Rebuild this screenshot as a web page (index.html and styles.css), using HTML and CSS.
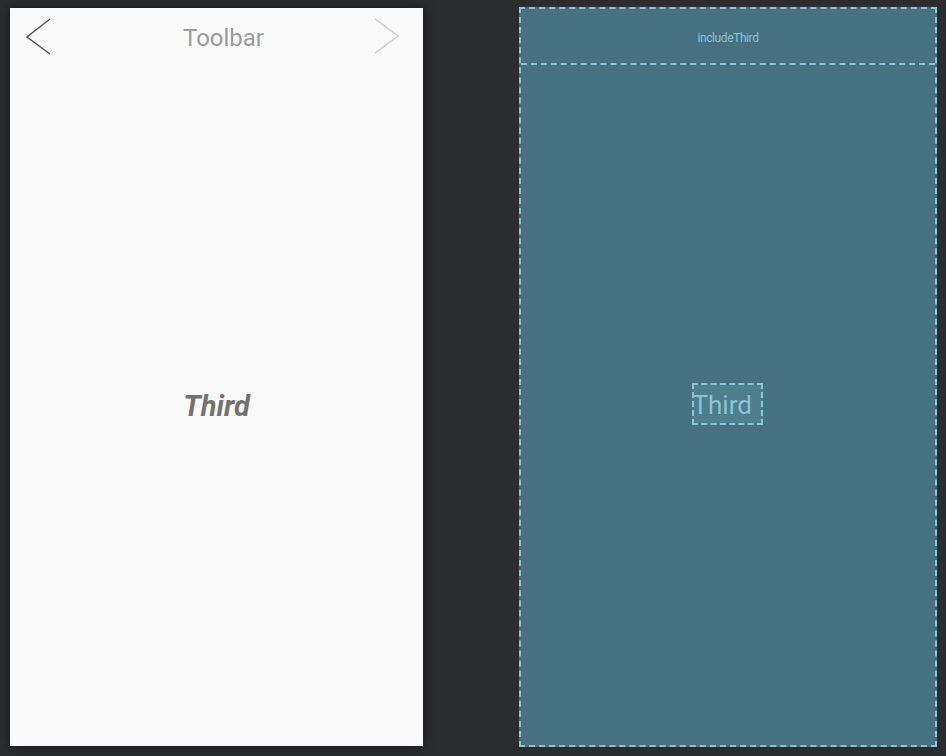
FILE: index.html
```html
<!DOCTYPE html>
<html lang="en">
<head>
    <meta charset="UTF-8">
    <meta name="viewport" content="width=device-width, initial-scale=1.0">
    <title>Layout preview</title>
    <link rel="stylesheet" href="styles.css">
</head>
<body>
    <div class="workspace">
        <div class="phone">
            <div class="toolbar">
                <svg class="nav-icon" width="30" height="40" viewBox="0 0 30 40">
                    <polyline points="24,2 1,20 24,37" fill="none" stroke="#555" stroke-width="1.5"/>
                </svg>
                <span class="toolbar-title">Toolbar</span>
                <svg class="nav-icon" width="30" height="40" viewBox="0 0 30 40">
                    <polyline points="6,2 29,19 6,36" fill="none" stroke="#cfcfcf" stroke-width="1.5"/>
                </svg>
            </div>
            <div class="phone-content">
                <span class="big-label">Third</span>
            </div>
        </div>

        <div class="blueprint">
            <div class="bp-header">includeThird</div>
            <div class="bp-content">
                <div class="bp-label">Third</div>
            </div>
        </div>
    </div>
</body>
</html>
```

FILE: styles.css
```css
body {
    margin: 0;
    background-color: #2b2c2e;
    font-family: Roboto, "Liberation Sans", sans-serif;
    height: 100vh;
    overflow: hidden;
}

.workspace {
    display: flex;
    align-items: flex-start;
    padding: 8px 0 0 10px;
}

.phone {
    width: 413px;
    height: 738px;
    background-color: #fafafa;
    box-shadow: 0 0 10px rgba(0, 0, 0, 0.5);
    display: flex;
    flex-direction: column;
}

.toolbar {
    height: 58px;
    display: flex;
    align-items: center;
    justify-content: space-between;
    padding: 0 24px 0 16px;
}

.nav-icon {
    display: block;
}

.toolbar-title {
    font-size: 24px;
    color: #9b9b9b;
    margin-left: 22px;
    padding-top: 2px;
}

.phone-content {
    flex: 1;
    display: flex;
    justify-content: center;
    align-items: center;
}

.big-label {
    font-size: 29px;
    font-weight: bold;
    font-style: italic;
    color: #727272;
}

.blueprint {
    margin-left: 96px;
    margin-top: -1px;
    width: 414px;
    height: 736px;
    background-color: #477180;
    border: 2px dashed #86c5d8;
    display: flex;
    flex-direction: column;
}

.bp-header {
    height: 56px;
    border-bottom: 2px dashed #86c5d8;
    display: flex;
    justify-content: center;
    align-items: center;
    font-size: 12px;
    color: #88c3d5;
    letter-spacing: -0.4px;
    padding-top: 4px;
    box-sizing: border-box;
}

.bp-content {
    flex: 1;
    display: flex;
    justify-content: center;
    align-items: center;
    padding-bottom: 3px;
}

.bp-label {
    width: 71px;
    height: 42px;
    margin-left: -2px;
    box-sizing: border-box;
    border: 2px dashed #86c5d8;
    background-color: #4e7d8c;
    color: #8bc4d6;
    font-size: 26px;
    line-height: 40px;
    text-indent: -1px;
    white-space: nowrap;
}
```
